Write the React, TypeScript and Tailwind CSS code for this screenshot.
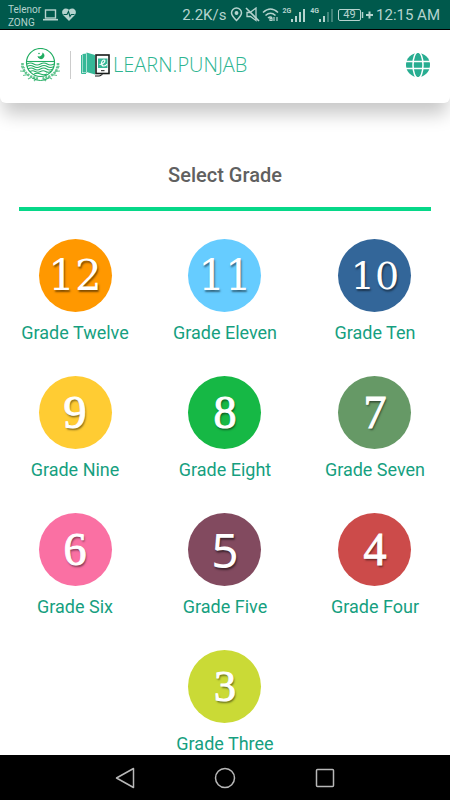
import React from "react";

type Grade = { digits: string; name: string; circle: string; face: string };

const wide = "font-['DejaVu_Serif',serif] text-[42px]";
const serif = "font-['Liberation_Serif',serif] text-[46px] [-webkit-text-stroke:1px_white]";

const grades: Grade[] = [
  { digits: "12", name: "Grade Twelve", circle: "bg-[#ff9800]", face: wide },
  { digits: "11", name: "Grade Eleven", circle: "bg-[#66ccff]", face: wide },
  { digits: "10", name: "Grade Ten", circle: "bg-[#336699]", face: "font-['DejaVu_Serif',serif] text-[38px]" },
  { digits: "9", name: "Grade Nine", circle: "bg-[#ffcc33]", face: serif },
  { digits: "8", name: "Grade Eight", circle: "bg-[#16b845]", face: serif },
  { digits: "7", name: "Grade Seven", circle: "bg-[#669966]", face: serif },
  { digits: "6", name: "Grade Six", circle: "bg-[#fa70a3]", face: serif },
  { digits: "5", name: "Grade Five", circle: "bg-[#824a5f]", face: "font-['Noto_Sans',sans-serif] text-[48px]" },
  { digits: "4", name: "Grade Four", circle: "bg-[#cc4b4a]", face: serif },
  {
    digits: "3",
    name: "Grade Three",
    circle: "bg-[#cada36]",
    face: "font-['Liberation_Serif',serif] text-[44px] [-webkit-text-stroke:1px_white]",
  },
];

function SignalBars({ label, dim }: { label: string; dim?: boolean }) {
  return (
    <div className="flex items-start">
      <span className="text-[7px] leading-[9px] font-bold">{label}</span>
      <svg width="15" height="16" viewBox="0 0 15 16" fill="currentColor" aria-hidden="true">
        <rect x="0" y="12" width="2" height="3" />
        <rect x="4" y="9" width="2" height="6" />
        <rect x="8" y="5" width="2" height="10" opacity={dim ? 0.35 : 1} />
        <rect x="12" y="2" width="2" height="13" opacity={dim ? 0.35 : 1} />
      </svg>
    </div>
  );
}

function StatusBar() {
  return (
    <div className="flex h-[30px] items-center border-b border-black bg-[#00594c] pr-2.5 pl-2 text-[#b5d3ce]">
      <div className="pt-0.5 text-[10px] leading-[13px]">
        <div>Telenor</div>
        <div>ZONG</div>
      </div>
      <svg className="ml-0.5" width="15" height="12" viewBox="0 0 15 12" fill="none" stroke="currentColor" aria-hidden="true">
        <rect x="2.5" y="1" width="10" height="8" strokeWidth="1.4" />
        <path d="M0 10.7h15" strokeWidth="1.6" />
      </svg>
      <svg className="ml-1" width="14" height="13" viewBox="0 0 14 13" aria-hidden="true">
        <path d="M7 13 1.3 7.3C-2 3.5 2-2 7 1.7 12-2 16 3.500 12.700 7.300Z" fill="currentColor" />
        <path d="M1.500 6.500H5L6.500 3.500 8 8.500 9.300 6.500h3.200" fill="none" stroke="#00594c" strokeWidth="1.1" />
      </svg>
      <div className="ml-auto flex items-center">
        <span className="text-[15px] leading-5">2.2K/s</span>
        <svg className="ml-1" width="13" height="15" viewBox="0 0 13 15" fill="none" stroke="currentColor" strokeWidth="1.5" aria-hidden="true">
          <path d="M6.500 13.500C3.500 10.500 1.500 8 1.500 6a5 5 0 0 1 10 0c0 2-2 4.500-5 7.500Z" />
          <circle cx="6.500" cy="6" r="1.2" fill="currentColor" />
        </svg>
        <svg className="ml-0.5" width="15" height="15" viewBox="0 0 15 15" fill="none" stroke="currentColor" strokeWidth="1.3" aria-hidden="true">
          <path d="M2 5.500h3L11 1v12.500L5.500 9.500H2Z" />
          <path d="m1 1 13 13" strokeWidth="1.6" />
        </svg>
        <svg className="ml-0.5" width="18" height="15" viewBox="0 0 18 15" fill="none" stroke="currentColor" strokeWidth="1.6" aria-hidden="true">
          <path d="M1 5.500Q8.500-1.500 16 5.500M3.500 8.500q5-4.500 10 0M6 11q2.500-2 4 0" />
          <path d="M8 11.500h2v2H8zM12 10v4m3-4v4" strokeWidth="1.2" />
        </svg>
        <div className="ml-0.5 flex gap-1">
          <SignalBars label="2G" />
          <SignalBars label="4G" dim />
        </div>
        <div className="ml-1 flex h-3 w-[23px] items-center justify-center rounded-[2px] border border-current text-[11px] leading-none">
          49
        </div>
        <svg width="13" height="12" viewBox="0 0 13 12" fill="none" stroke="currentColor" aria-hidden="true">
          <path d="M1.500 3v6" strokeWidth="1.500" />
          <path d="M5 6h7M8.500 2.500v7" strokeWidth="2" />
        </svg>
        <span className="ml-0.5 text-[15px] leading-5">12:15 AM</span>
      </div>
    </div>
  );
}

function Emblem() {
  return (
    <svg width="40" height="34" viewBox="0 0 40 34" fill="none" stroke="#21ad62" role="img" aria-label="Government of the Punjab">
      <circle cx="20.500" cy="14.500" r="14" strokeWidth="1.200" />
      <path d="M22.500 4.500a3.500 3.500 0 1 1-5 3.500 3.500 3.500 0 0 0 5-3.500Z" fill="#21ad62" stroke="none" />
      <circle cx="19" cy="5.500" r=".8" fill="#21ad62" stroke="none" />
      <g strokeWidth="1.100">
        <path d="M7 13.500h27" />
        <path d="M7 16q3.400-2 6.700 0t6.800 0 6.700 0 6.800 0" />
        <path d="M7 18.500q3.400-2 6.700 0t6.800 0 6.700 0 6.800 0" />
        <path d="M8 21q3.100-2 6.200 0t6.300 0 6.200 0 6.300 0" />
        <path d="M10 23.500q2.600-1.500 5.200 0t5.300 0 5.200 0 5.300 0" />
        <path d="M14 26q3.200-1.500 6.500 0t6.500 0" />
      </g>
      <g opacity="0.7">
        <path d="M2.500 15C2 23 8 29 18 30.500M38 15c.5 8-5.500 14-15.500 15.500" strokeWidth="2.600" strokeDasharray="2.200 1" />
        <path d="M1 18.500 5 20M0 23l5 .5M3 27.500l5-1M8 31l4-2M14 33l3-3M39.500 18.500 36 20M40 23l-5 .5M37 27.500l-5-1M32 31l-4-2M26 33l-3-3" strokeWidth="1.200" />
      </g>
      <path d="M12 30q8.500 5 17 0" strokeWidth="1" />
    </svg>
  );
}

function BookLogo() {
  return (
    <svg width="30" height="26" viewBox="0 0 30 26" fill="none" aria-hidden="true">
      <path d="M.5 3v18.500H5" stroke="#36b897" strokeWidth="1" />
      <path d="M1.500 2v18.500H6V1.500Z" fill="#36b897" />
      <path d="M5.500 .5 14 3v19.500L5.500 20Z" fill="#36b897" />
      <path d="M5.500 1.500V20" stroke="white" strokeWidth="0.6" />
      <rect x="15" y="3" width="13" height="18.500" stroke="#171b1a" strokeWidth="1.600" />
      <rect x="17" y="6.500" width="9.500" height="9.500" fill="#36b897" />
      <path d="M18.500 12.500c5 0 6.500-4.500 4.500-4.500-2.500 0-4 6 0 6 1.500 0 2.500-1 3-2" stroke="white" strokeWidth="1.200" />
      <path d="M20 18.700h3.500" stroke="#171b1a" strokeWidth="1" />
      <path d="M14 24h4c2 0 2-1.500 3.500-1.500" stroke="#171b1a" strokeWidth="1.200" />
    </svg>
  );
}

function Header() {
  return (
    <header className="flex h-[73px] items-center rounded-b-md bg-white px-5 pb-1 shadow-[0_14px_18px_-3px_rgba(0,0,0,0.22)]">
      <Emblem />
      <div className="mx-2.5 h-7 w-px bg-[#cccccc]" />
      <BookLogo />
      <span className="ml-0.5 font-['Open_Sans',sans-serif] text-[20px] leading-6 font-light text-[#2eb591]">LEARN.PUNJAB</span>
      <button type="button" aria-label="Change language" className="ml-auto">
        <svg width="24" height="24" viewBox="0 0 24 24" aria-hidden="true">
          <circle cx="12" cy="12" r="12" fill="#28ad91" />
          <g fill="none" stroke="white" strokeWidth="1.500">
            <ellipse cx="12" cy="12" rx="5" ry="13" />
            <path d="M0 8.500h24M0 15.500h24" />
          </g>
        </svg>
      </button>
    </header>
  );
}

export default function App() {
  return (
    <div className="flex min-h-screen flex-col bg-white font-['Roboto',sans-serif]">
      <StatusBar />
      <Header />
      <main className="flex-1">
        <div className="mx-[19px] border-b-4 border-[#06d889] pt-[60px] pb-5">
          <h1 className="text-center text-[20px] leading-6 font-medium text-[#606060]">Select Grade</h1>
        </div>
        <div className="flex flex-wrap justify-center gap-y-8 pt-7">
          {grades.map((g) => (
            <button key={g.name} type="button" className="flex w-1/3 flex-col items-center gap-2.5">
              <span
                className={`flex size-[73px] items-center justify-center rounded-full leading-none text-white [text-shadow:1px_2px_2px_rgba(0,0,0,0.5)] ${g.circle} ${g.face}`}
              >
                {g.digits}
              </span>
              <span className="text-[18px] leading-[22px] whitespace-nowrap text-[#169f80]">{g.name}</span>
            </button>
          ))}
        </div>
      </main>
      <nav aria-label="System" className="flex h-[45px] items-center justify-center gap-[76px] bg-black text-[#b8b8b8]">
        <button type="button" aria-label="Back">
          <svg width="24" height="24" viewBox="0 0 24 24" fill="none" stroke="currentColor" strokeWidth="1.500" strokeLinejoin="round">
            <path d="M20.500 2.500v19L3.500 12Z" />
          </svg>
        </button>
        <button type="button" aria-label="Home">
          <svg width="24" height="24" viewBox="0 0 24 24" fill="none" stroke="currentColor" strokeWidth="1.500">
            <circle cx="12" cy="12" r="9.500" />
          </svg>
        </button>
        <button type="button" aria-label="Recent apps">
          <svg width="24" height="24" viewBox="0 0 24 24" fill="none" stroke="currentColor" strokeWidth="1.500">
            <rect x="3.500" y="3.500" width="17" height="17" rx="1" />
          </svg>
        </button>
      </nav>
    </div>
  );
}
